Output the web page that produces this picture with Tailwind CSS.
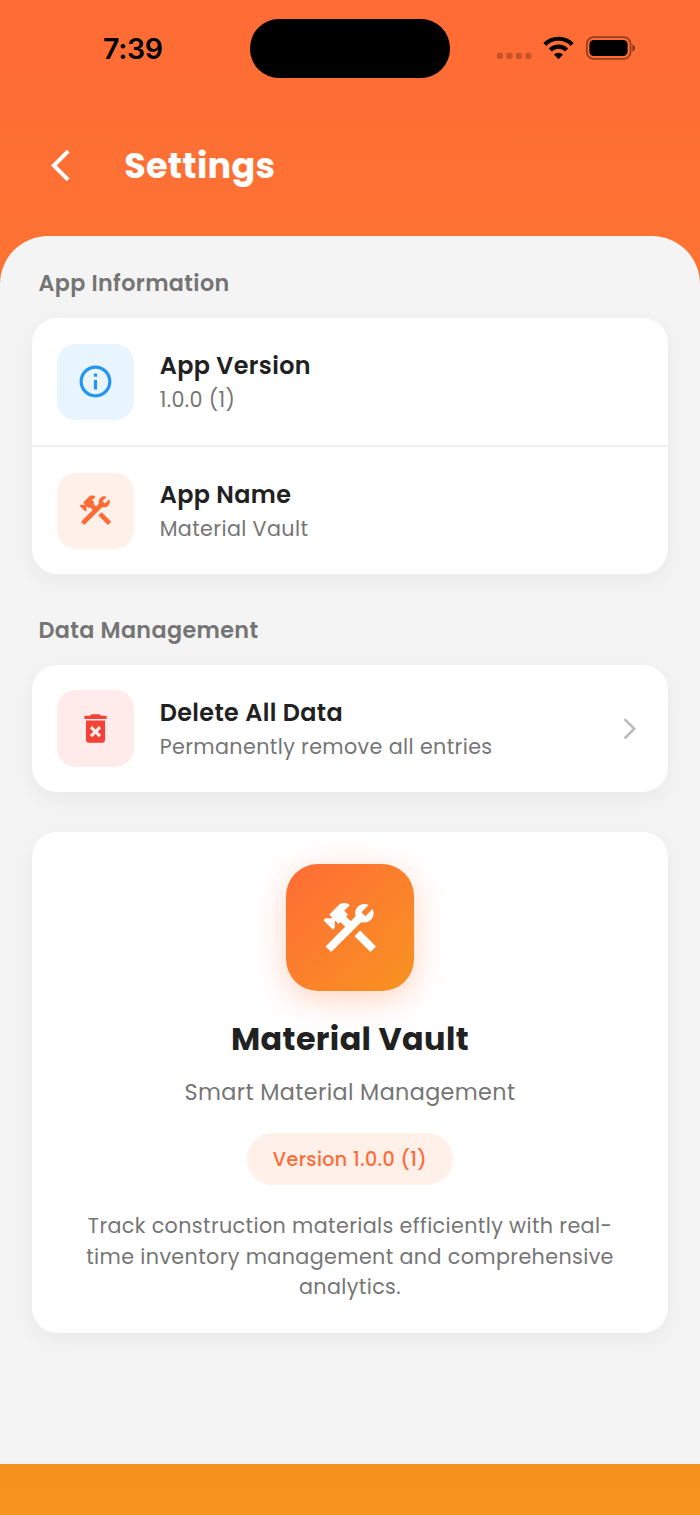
<!DOCTYPE html>
<html lang="en">
<head>
    <meta charset="UTF-8">
    <meta name="viewport" content="width=device-width, initial-scale=1.0">
    <title>Settings - Material Vault</title>
    <script src="https://cdn.jsdelivr.net/npm/@tailwindcss/browser@4"></script>
</head>
<body class="font-[Poppins,Inter,sans-serif] text-[#212121] tracking-[0.38px] antialiased">
    <div class="w-[700px] h-[1515px] flex flex-col overflow-hidden bg-linear-to-b from-[#ff6b35] to-[#f7931e]">

        <!-- Status bar -->
        <div class="h-24 shrink-0 grid grid-cols-[250px_200px_250px]">
            <div class="pt-[29px] pl-[103px] text-[28.5px] leading-10 font-semibold text-black tracking-[-0.3px] font-[Inter,sans-serif]">7:39</div>
            <div class="mt-[19px] h-[58.5px] rounded-[29px] bg-black"></div>
            <div class="h-24 flex items-center pl-[46px]">
                <svg class="w-[150px] h-24" viewBox="496 0 150 96">
                    <g fill="#000" fill-opacity=".22">
                        <rect x="496.8" y="52.8" width="6.2" height="6.2" rx="1.8"/>
                        <rect x="506.3" y="52.8" width="6.2" height="6.2" rx="1.8"/>
                        <rect x="515.8" y="52.8" width="6.2" height="6.2" rx="1.8"/>
                        <rect x="525.3" y="52.8" width="6.2" height="6.2" rx="1.8"/>
                    </g>
                    <g fill="none" stroke="#000" stroke-width="4.2">
                        <path d="M544.8 44.4a19.4 19.4 0 0 1 27.4 0"/>
                        <path d="M550.3 50a11.6 11.6 0 0 1 16.4 0"/>
                    </g>
                    <path d="M558.5 59.2l-4.6-4.7a6.6 6.6 0 0 1 9.2 0z"/>
                    <rect x="586.8" y="37.2" width="43.8" height="21.6" rx="6.8" fill="none" stroke="#000" stroke-opacity=".42" stroke-width="1.8"/>
                    <rect x="589.4" y="40" width="38.2" height="16" rx="4.4"/>
                    <path d="M632.4 44.6c1.7.6 2.6 1.9 2.6 3.5s-.9 2.9-2.6 3.5z" fill-opacity=".5"/>
                </svg>
            </div>
        </div>

        <!-- Header -->
        <div class="h-[139.5px] shrink-0 flex items-center pl-[51.3px] pb-px text-white">
            <svg class="w-[38.2px] h-[39px]" viewBox="0 0 24 24" fill="currentColor"><path d="M11.67 3.87L9.9 2.1 0 12l9.9 9.9 1.77-1.77L3.54 12z"/></svg>
            <h1 class="ml-[34.7px] mt-px text-[35px] leading-[52px] font-bold tracking-[0.3px]">Settings</h1>
        </div>

        <!-- Content -->
        <main class="flex-1 px-8 pt-[31.5px] rounded-t-[48px] bg-[#f4f4f4]">
            <h2 class="h-[33.4px] pl-[6.5px] text-[22.27px] leading-[33.4px] font-semibold text-[#757575]">App Information</h2>

            <div class="mt-[17.8px] rounded-[25px] bg-white shadow-[0_7px_22px_rgba(0,0,0,0.05)]">
                <div class="h-[127.3px] flex items-center px-[25.3px] gap-[26px]">
                    <div class="size-[76.4px] rounded-[19px] bg-[#e8f4fe] text-[#2196f3] flex items-center justify-center">
                        <svg class="size-[39px]" viewBox="-0.25 -0.25 24.5 24.5" fill="currentColor"><path d="M11 7h2v2h-2V7zm0 4h2v6h-2v-6zm1-9C6.48 2 2 6.48 2 12s4.48 10 10 10 10-4.48 10-10S17.52 2 12 2zm0 18c-4.41 0-8-3.59-8-8s3.59-8 8-8 8 3.59 8 8-3.59 8-8 8z"/></svg>
                    </div>
                    <div class="pt-[0.6px]">
                        <p class="text-[23.87px] leading-[36.2px] font-semibold">App Version</p>
                        <p class="text-[20.68px] leading-[32.4px] text-[#757575]">1.0.0 (1)</p>
                    </div>
                </div>
                <div class="h-[1.6px] bg-[#f0f0f0]"></div>
                <div class="h-[127.3px] flex items-center px-[25.3px] gap-[26px]">
                    <div class="size-[76.4px] rounded-[19px] bg-[#fff0ea] text-[#ff6b35] flex items-center justify-center">
                        <svg class="size-[39px]" viewBox="-0.25 -0.25 24.5 24.5" fill="currentColor"><path d="M13.783 15.172l2.121-2.121 5.996 5.996-2.121 2.121z"/><path d="M17.5 10c1.93 0 3.5-1.57 3.5-3.5 0-.58-.16-1.12-.41-1.6l-2.7 2.7-1.49-1.49 2.7-2.7c-.48-.25-1.02-.41-1.6-.41C15.57 3 14 4.57 14 6.5c0 .41.08.8.21 1.16l-1.85 1.85-1.78-1.78.71-.71-1.41-1.41L12 3.49c-1.17-1.17-3.07-1.17-4.24 0L4.22 7.03l1.41 1.41H2.81l-.71.71 3.54 3.54.71-.71V9.15l1.41 1.41.71-.71 1.78 1.78-7.41 7.41 2.12 2.12L16.34 9.79c.36.13.75.21 1.16.21z"/></svg>
                    </div>
                    <div class="pt-[1.6px]">
                        <p class="text-[23.87px] leading-[36.2px] font-semibold">App Name</p>
                        <p class="text-[20.68px] leading-[32.4px] text-[#757575]">Material Vault</p>
                    </div>
                </div>
            </div>

            <h2 class="mt-[39.4px] h-[33.4px] pl-[6.5px] text-[22.27px] leading-[33.4px] font-semibold text-[#757575]">Data Management</h2>

            <div class="mt-[17.8px] rounded-[25px] bg-white shadow-[0_7px_22px_rgba(0,0,0,0.05)]">
                <div class="h-[127.3px] flex items-center px-[25.3px] gap-[26px]">
                    <div class="size-[76.4px] rounded-[19px] bg-[#feebea] text-[#f44336] flex items-center justify-center">
                        <svg class="size-[39px]" viewBox="-0.25 -0.25 24.5 24.5" fill="currentColor"><path d="M6 19c0 1.1.9 2 2 2h8c1.1 0 2-.9 2-2V7H6v12zm2.46-7.12l1.41-1.41L12 12.59l2.12-2.12 1.41 1.41L13.41 14l2.12 2.12-1.41 1.41L12 15.41l-2.12 2.12-1.41-1.41L10.59 14l-2.13-2.12zM15.5 4l-1-1h-5l-1 1H5v2h14V4z"/></svg>
                    </div>
                    <div class="flex-1 pt-[1.6px]">
                        <p class="text-[23.87px] leading-[36.2px] font-semibold">Delete All Data</p>
                        <p class="text-[20.68px] leading-[32.4px] text-[#757575]">Permanently remove all entries</p>
                    </div>
                    <svg class="size-[25.5px] text-[#bdbdbd]" viewBox="0 0 24 24" fill="currentColor"><path d="M6.23 20.23L8 22l10-10L8 2 6.23 3.77 14.46 12z"/></svg>
                </div>
            </div>

            <!-- About -->
            <div class="mt-[39.8px] h-[501px] pt-[31.8px] rounded-[25px] bg-white shadow-[0_7px_22px_rgba(0,0,0,0.05)] flex flex-col items-center text-center">
                <div class="size-[127.3px] rounded-[32px] bg-linear-to-br from-[#ff6b35] to-[#f7931e] shadow-[0_8px_32px_rgba(255,107,53,0.3)] flex items-center justify-center text-white">
                    <svg class="size-[63.6px]" viewBox="0 0 24 24" fill="currentColor"><path d="M13.783 15.172l2.121-2.121 5.996 5.996-2.121 2.121z"/><path d="M17.5 10c1.93 0 3.5-1.57 3.5-3.5 0-.58-.16-1.12-.41-1.6l-2.7 2.7-1.49-1.49 2.7-2.7c-.48-.25-1.02-.41-1.6-.41C15.57 3 14 4.57 14 6.5c0 .41.08.8.21 1.16l-1.85 1.85-1.78-1.78.71-.71-1.41-1.41L12 3.49c-1.17-1.17-3.07-1.17-4.24 0L4.22 7.03l1.41 1.41H2.81l-.71.71 3.54 3.54.71-.71V9.15l1.41 1.41.71-.71 1.78 1.78-7.41 7.41 2.12 2.12L16.34 9.79c.36.13.75.21 1.16.21z"/></svg>
                </div>
                <h3 class="mt-6 text-[31.82px] leading-[48px] font-bold">Material Vault</h3>
                <p class="mt-[13px] text-[22.27px] leading-[33px] text-[#757575]">Smart Material Management</p>
                <div class="mt-[23.5px] px-[25.5px] pt-px rounded-full bg-[#fff0ea] text-[#ff6b35] text-[19.09px] leading-[51.5px] font-medium"><span class="relative top-[0.5px]">Version 1.0.0 (1)</span></div>
                <p class="mt-[26.3px] w-[560px] text-[20.68px] leading-[30.3px] text-[#757575]">Track construction materials efficiently with real-<br>time inventory management and comprehensive<br>analytics.</p>
            </div>
        </main>

        <div class="h-[51px] shrink-0"></div>
    </div>
</body>
</html>
